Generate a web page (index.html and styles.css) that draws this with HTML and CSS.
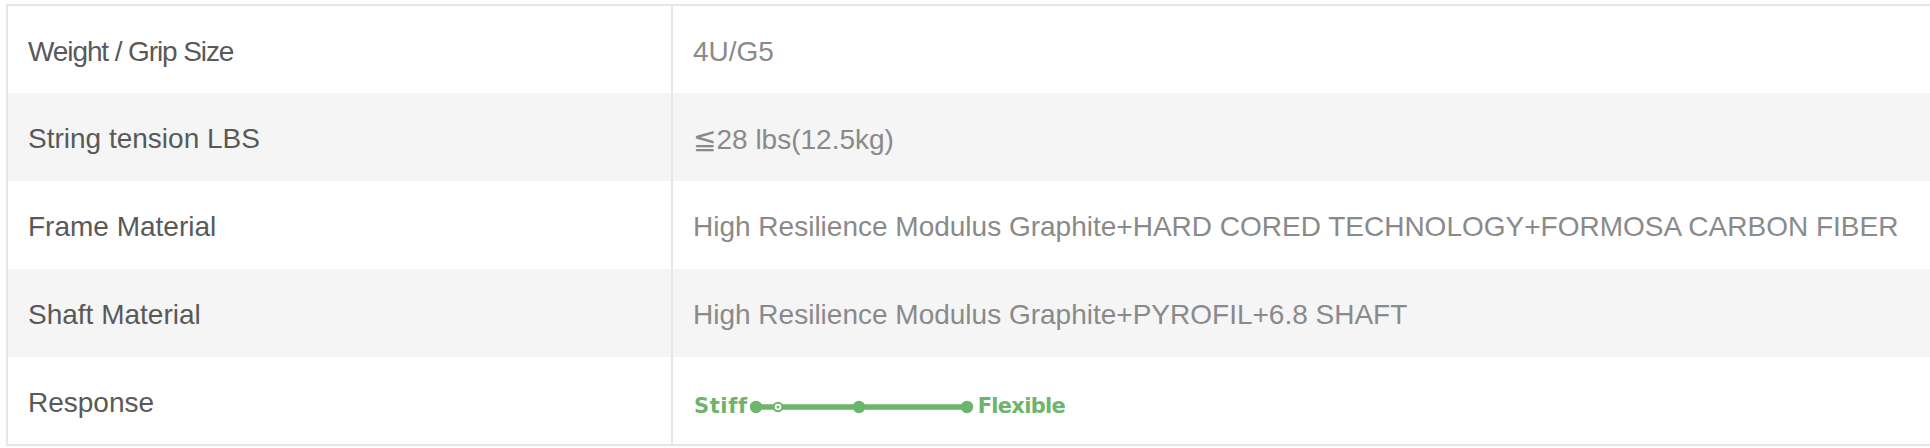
FILE: index.html
```html
<!DOCTYPE html>
<html>
<head>
<meta charset="utf-8">
<link rel="stylesheet" href="styles.css">
</head>
<body>
<table class="spec">
  <tbody>
    <tr><td class="label label-tight">Weight / Grip Size</td><td class="value">4U/G5</td></tr>
    <tr class="alt"><td class="label">String tension LBS</td><td class="value">≦28 lbs(12.5kg)</td></tr>
    <tr><td class="label">Frame Material</td><td class="value">High Resilience Modulus Graphite+HARD CORED TECHNOLOGY+FORMOSA CARBON FIBER</td></tr>
    <tr class="alt"><td class="label">Shaft Material</td><td class="value">High Resilience Modulus Graphite+PYROFIL+6.8 SHAFT</td></tr>
    <tr><td class="label">Response</td><td class="value">
      <div class="flex-scale">
        <span class="flex-word stiff">Stiff</span>
        <svg class="flex-line" width="230" height="20" viewBox="0 0 230 20">
          <line x1="6" y1="10" x2="222" y2="10" stroke="#6cb56a" stroke-width="5.5"/>
          <circle cx="8" cy="10" r="6.2" fill="#6cb56a"/>
          <circle cx="30" cy="10" r="5.3" fill="#6cb56a"/>
          <circle cx="30" cy="10" r="3.3" fill="#ffffff"/>
          <circle cx="30" cy="10" r="1.5" fill="#6cb56a"/>
          <circle cx="111" cy="10" r="6.2" fill="#6cb56a"/>
          <circle cx="219" cy="10" r="6.2" fill="#6cb56a"/>
        </svg>
        <span class="flex-word flexible">Flexible</span>
      </div>
    </td></tr>
  </tbody>
</table>
</body>
</html>
```
FILE: styles.css
```css
html, body {
  margin: 0;
  background: #ffffff;
}
body {
  padding: 4px 0 0 6px;
  overflow: hidden;
  font-family: "Liberation Sans", Arial, "DejaVu Sans", sans-serif;
}
.spec {
  border-collapse: collapse;
  width: 1930px;
  border: 2px solid #e6e6e6;
}
.spec td {
  height: 88px;
  padding: 4px 0 0 20px;
  box-sizing: border-box;
  font-size: 28px;
  vertical-align: middle;
}
.spec tr.alt td {
  background: #f5f5f5;
}
.spec td.label {
  width: 665px;
  color: #595959;
  border-right: 2px solid #e6e6e6;
}
.spec td.label-tight {
  letter-spacing: -1.1px;
}
.spec td.value {
  color: #8a8a8a;
}
.flex-scale {
  display: flex;
  align-items: center;
  margin: 7px 0 0 1px;
}
.flex-word {
  font-family: "DejaVu Sans", sans-serif;
  font-weight: bold;
  font-size: 21px;
  color: #6cb56a;
}
.stiff {
  letter-spacing: 0.6px;
}
.flexible {
  letter-spacing: -0.7px;
}
.flex-line {
  display: block;
  margin-top: 1px;
}
```
